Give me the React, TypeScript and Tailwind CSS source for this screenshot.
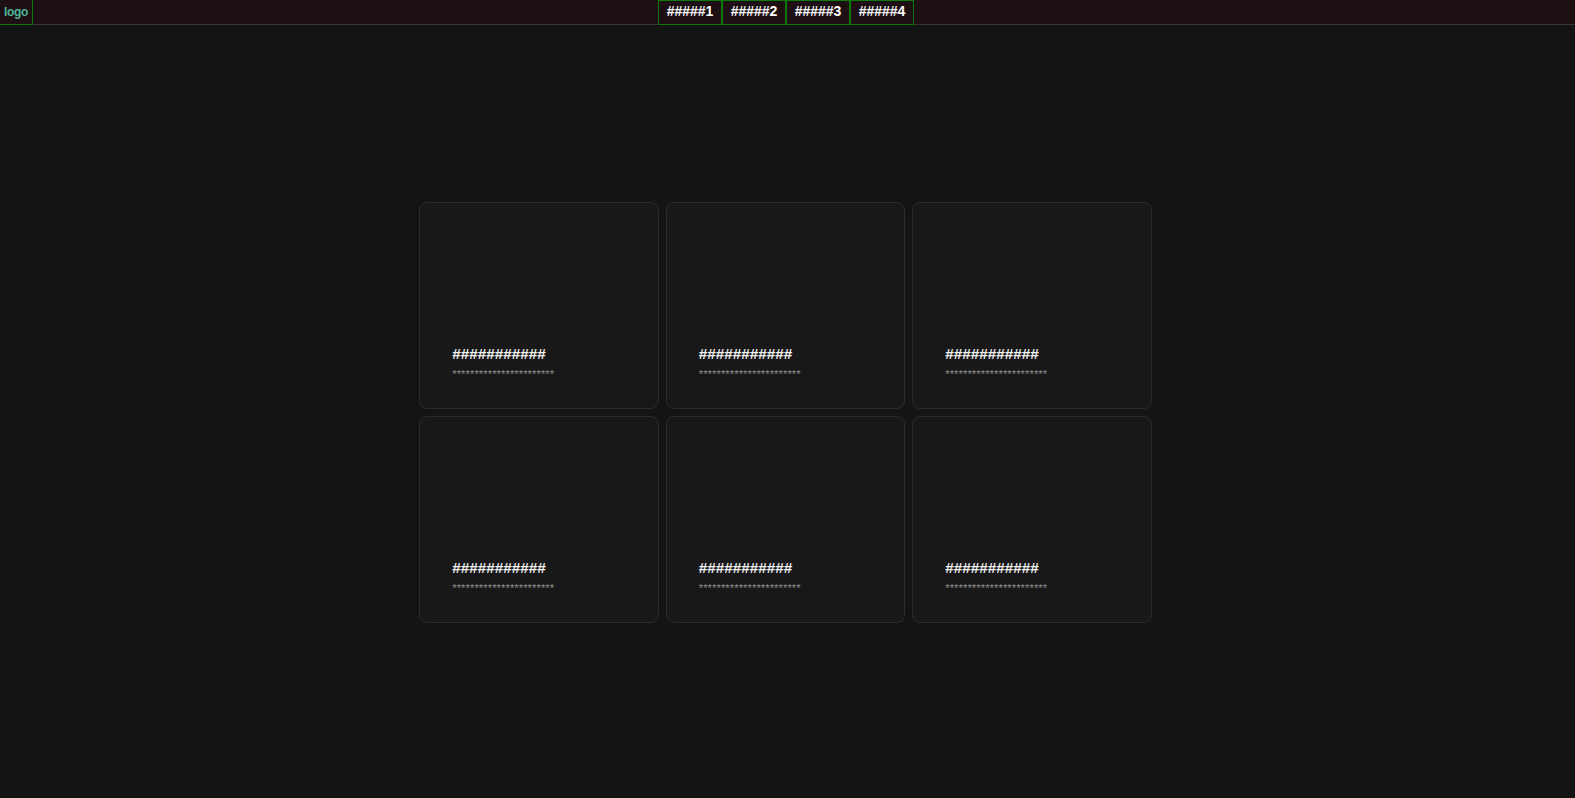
import React from 'react';

const navItems = ['#####1', '#####2', '#####3', '#####4'];

const cards = Array.from({ length: 6 }, (_, i) => ({
  id: i,
  title: '###########',
  sub: '***********************',
}));

const Header: React.FC = () => (
  <header className="h-[25px] bg-[#1d1012] border-b border-[#3b3435] relative flex items-start">
    <div className="h-[25px] w-[33px] border-r border-b border-[#0b7a0b] flex items-center justify-center">
      <span className="text-[#4fb59c] font-bold text-[12px] leading-none tracking-[-0.3px]">logo</span>
    </div>
    <nav className="absolute left-[658px] top-0 flex">
      {navItems.map((n) => (
        <a
          key={n}
          href="#"
          className="h-[25px] w-[64px] border border-[#0b7a0b] flex items-center justify-center pb-[4px] text-white font-bold text-[14px] leading-none"
        >
          {n}
        </a>
      ))}
    </nav>
  </header>
);

export default function App() {
  return (
    <div className="min-h-[798px] bg-[#141414] flex flex-col" style={{ fontFamily: '"Liberation Sans", Arial, sans-serif' }}>
      <Header />
      <main className="flex-1 flex items-center justify-center pr-[4px] pt-[2px]">
        <div className="grid grid-cols-[239.5px_239.5px_239.5px] gap-x-[7px] gap-y-[7px]">
          {cards.map((c) => (
            <div
              key={c.id}
              className="h-[207px] bg-[#181818] border border-[#2b2b2b] rounded-[8px] px-[32px] pb-[28px] flex flex-col justify-end"
            >
              <h3 className="text-[#f2f2f2] font-bold text-[15.3px] leading-[16px]">{c.title}</h3>
              <p className="text-[#8a8a8a] text-[11.4px] leading-[11px] mt-[7px]">{c.sub}</p>
            </div>
          ))}
        </div>
      </main>
    </div>
  );
}
